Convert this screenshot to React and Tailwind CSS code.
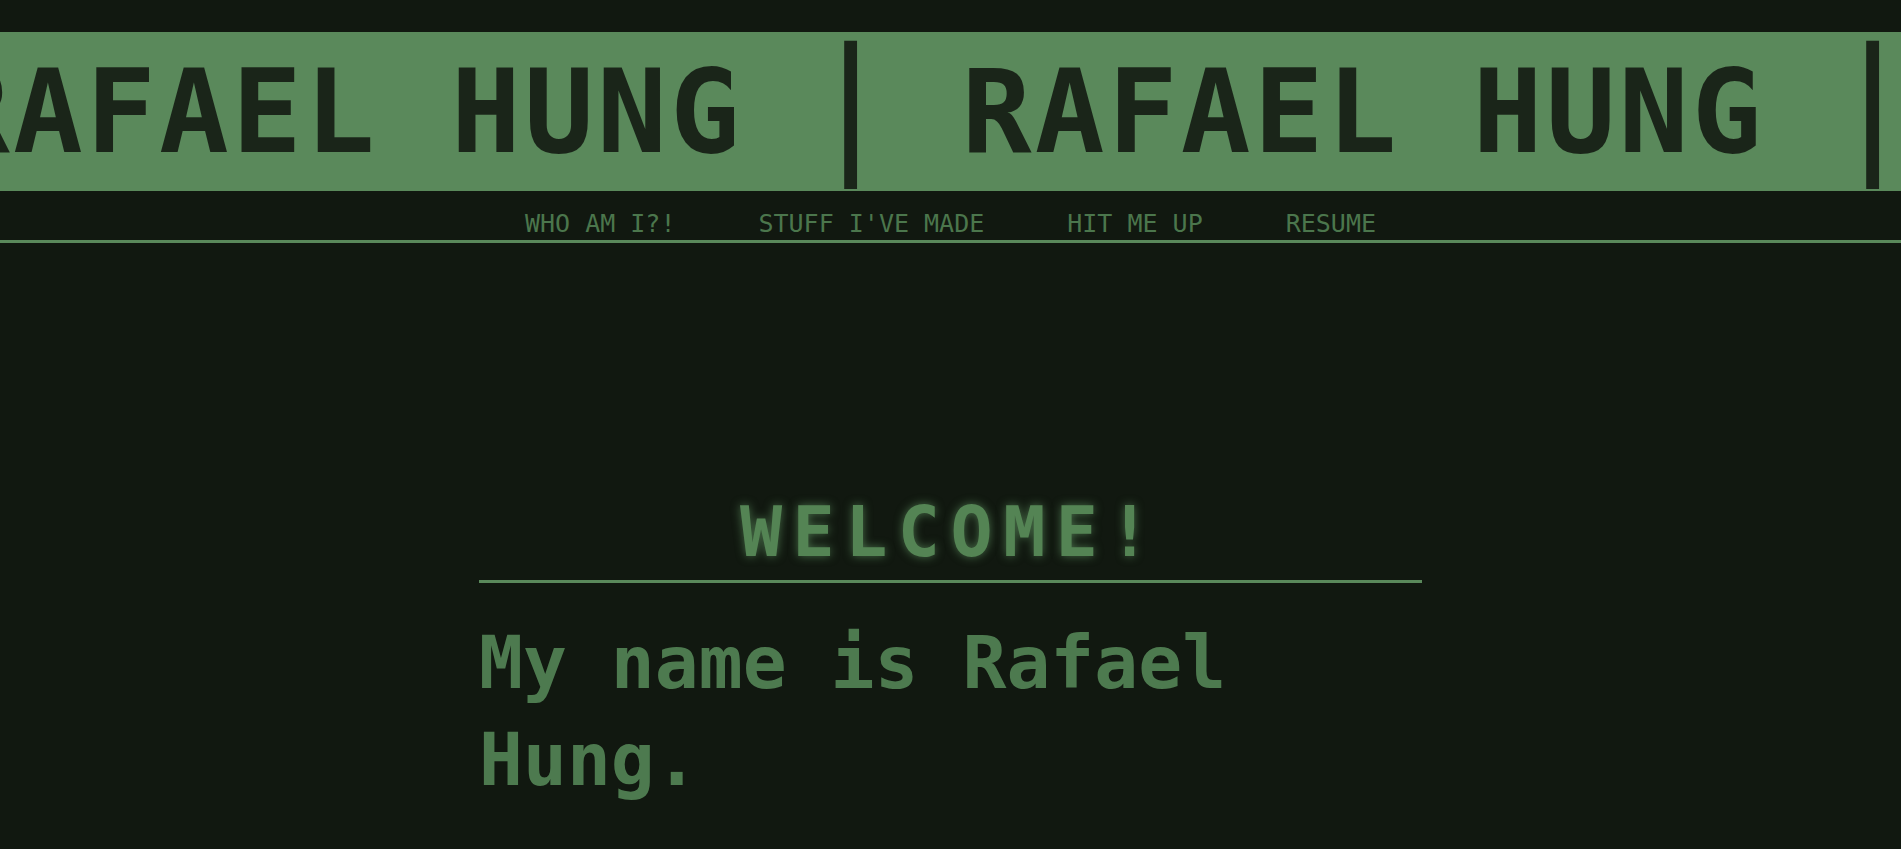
import React from "react";

const SEGMENTS = [0, 1, 2, 3];

function Marquee() {
  return (
    <div className="h-[159px] bg-[#5a895b] overflow-hidden flex items-center">
      <div className="whitespace-pre -ml-[60px] text-[116px] leading-none font-bold tracking-[3.15px] text-[#1a2519]">
        {SEGMENTS.map((i) => (
          <span key={i}>
            RAFAEL HUNG <span className="inline-block scale-y-[1.27] -translate-y-[9px]">|</span>{" "}
          </span>
        ))}
      </div>
    </div>
  );
}

function Nav() {
  const items = ["WHO AM I?!", "STUFF I'VE MADE", "HIT ME UP", "RESUME"];
  return (
    <nav className="flex justify-center gap-[83px] pt-[20px] pb-[4px] border-b-[3px] border-[#5a895b] text-[25px] leading-none text-[#4b764c]">
      {items.map((t) => (
        <a key={t} href="#" className="whitespace-pre">
          {t}
        </a>
      ))}
    </nav>
  );
}

export default function App() {
  return (
    <div className="min-h-screen bg-[#111810] pt-8 font-['DejaVu_Sans_Mono','Liberation_Mono',monospace]">
      <header>
        <Marquee />
        <Nav />
      </header>
      <main className="w-[943px] mx-auto mt-[254px]">
        <h1 className="text-center text-[70px] leading-none font-bold tracking-[10.5px] text-[#548454] pb-[13px] border-b-[3px] border-[#5a895b] [text-shadow:0_0_10px_rgba(90,137,91,0.75)]">
          WELCOME!
        </h1>
        <p className="mt-[31px] text-[73px] leading-[97px] font-bold text-[#4d7a4f]">
          My name is Rafael Hung.
        </p>
        <p className="mt-[44px] text-[36px] leading-[48px] text-[#4d7a4f]">
          I build things for the web, and sometimes for fun.
        </p>
      </main>
    </div>
  );
}
